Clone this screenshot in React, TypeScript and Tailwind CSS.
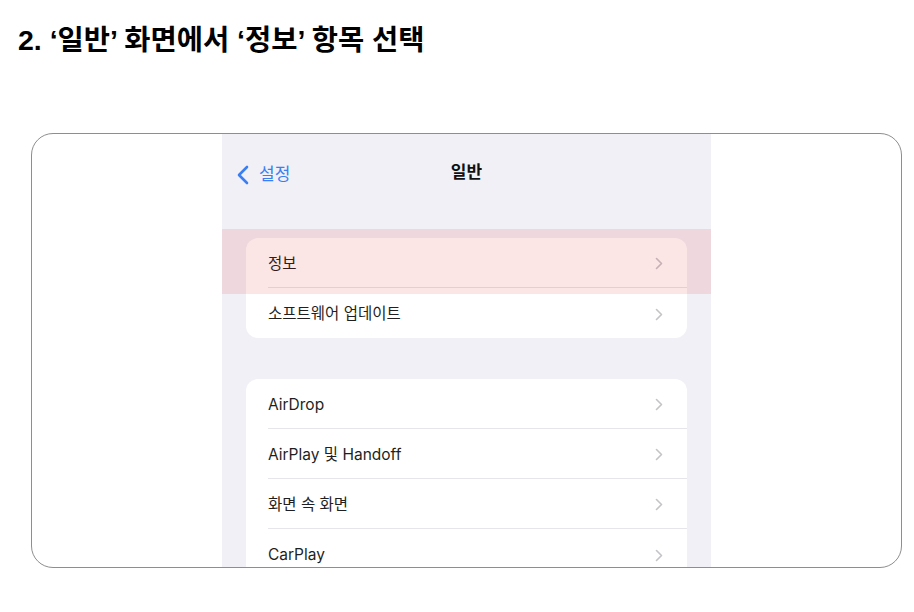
const groups = [
  ["정보", "소프트웨어 업데이트"],
  ["AirDrop", "AirPlay 및 Handoff", "화면 속 화면", "CarPlay"],
];

function Chevron() {
  return (
    <svg width="8" height="13" viewBox="0 0 8 13" fill="none" className="shrink-0">
      <path d="M1.5 1.5L6.5 6.5L1.5 11.5" stroke="#c4c4c8" strokeWidth="1.6" strokeLinecap="round" strokeLinejoin="round" />
    </svg>
  );
}

function Row({ label, last }: { label: string; last: boolean }) {
  return (
    <div className="flex h-[50px] flex-col pl-[22px]">
      <div className="flex flex-1 items-center justify-between pr-[24px] pt-[2px]">
        <span className="text-[15.5px] text-[#1f1f22]">{label}</span>
        <Chevron />
      </div>
      {!last && <div className="h-px bg-[#e6e6ea]" />}
    </div>
  );
}

export default function App() {
  return (
    <div
      className="h-[612px] w-[914px] overflow-hidden bg-white"
      style={{ fontFamily: '"Liberation Sans", "Noto Sans CJK KR", sans-serif' }}
    >
      <h1 className="pl-[18px] pt-[22px] text-[28.5px] font-bold leading-[36px] text-black">
        2. ‘일반’ 화면에서 ‘정보’ 항목 선택
      </h1>

      <div className="ml-[31px] mt-[75px] flex h-[435px] w-[871px] justify-center overflow-hidden rounded-[22px] border border-[#8e8e8e]">
        <div
          className="relative h-full w-[489px] bg-[#f1f0f6]"
          style={{ fontFamily: 'Inter, "Noto Sans CJK KR", sans-serif' }}
        >
          <div className="relative flex h-[78px] items-center justify-center">
            <div className="absolute left-[14px] top-[28px] flex items-center gap-[9px] text-[#3a7ff2]">
              <svg width="14" height="20" viewBox="0 0 14 20" fill="none">
                <path d="M11 2L3 10L11 18" stroke="#3a7ff2" strokeWidth="2.6" strokeLinecap="round" strokeLinejoin="round" />
              </svg>
              <span className="text-[17px]">설정</span>
            </div>
            <span className="text-[17px] font-semibold text-[#111]">일반</span>
          </div>

          <div className="flex flex-col gap-[41px] px-[24px] pt-[26px]">
            {groups.map((g, gi) => (
              <div key={gi} className="overflow-hidden rounded-[12px] bg-white">
                {g.map((label, i) => (
                  <Row key={label} label={label} last={i === g.length - 1} />
                ))}
              </div>
            ))}
          </div>

          <div className="absolute left-0 right-0 top-[95px] h-[65px] bg-[rgba(220,0,0,0.1)]" />
        </div>
      </div>
    </div>
  );
}
